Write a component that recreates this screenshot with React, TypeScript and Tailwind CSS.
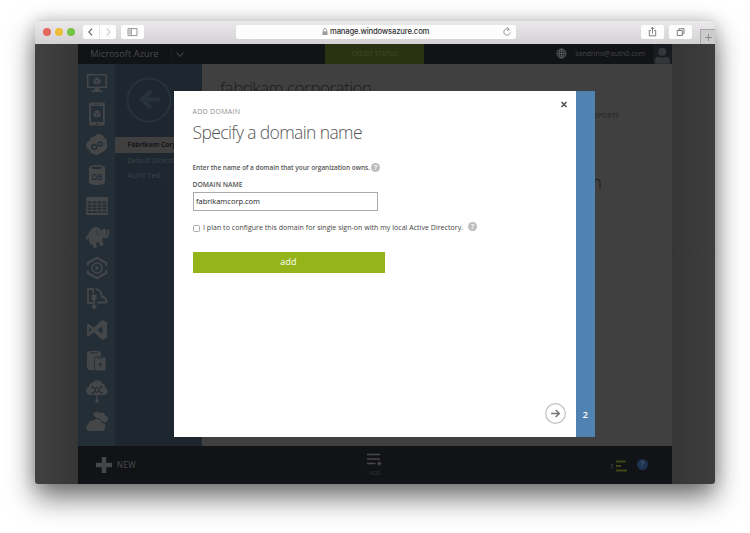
import React from "react";

const ink = "#454648";
const bg = "#232e37";

function Cube({ x, y }: { x: number; y: number }) {
  return (
    <g transform={`translate(${x} ${y})`}>
      <path d="M0-4 3.5-2v4L0 4-3.5 2v-4z" fill={ink} />
      <path d="M-3.4-1.9 0 0l3.4-1.9M0 0v3.8" stroke={bg} strokeWidth=".7" fill="none" />
    </g>
  );
}

const sideIcons: React.ReactNode[] = [
  <>
    <path d="M2.7 3.7h18.6v12.6H2.7z" fill="none" stroke={ink} strokeWidth="1.6" />
    <path d="M9.5 17h5v2.5h3V21h-11v-1.5h3z" />
    <Cube x={12} y={10} />
  </>,
  <>
    <path fillRule="evenodd" d="M5 .6h14a.8.8 0 0 1 .8.8v21.2a.8.8 0 0 1-.8.8H5a.8.8 0 0 1-.8-.8V1.400A.8.8 0 0 1 5 .6zM6 4v16h12V4zM9 1.800v.8h6v-.8zM11 21v1.200h2V21z" />
    <Cube x={12} y={12} />
  </>,
  <>
    <path d="M4 17a4.600 4.600 0 0 1-.6-9 5 5 0 0 1 5-4.500 5.500 5.500 0 0 1 10 1.500 3.500 3.500 0 0 1 2 5.500 4 4 0 0 1-1.500 6.500 4 4 0 0 1-4 2.500 4.600 4.600 0 0 1-7 1.500A4 4 0 0 1 4 17z" transform="translate(1 0)" />
    <circle cx="9.300" cy="14" r="2.300" fill="none" stroke={bg} strokeWidth="1.400" />
    <circle cx="15.200" cy="11" r="2" fill="none" stroke={bg} strokeWidth="1.300" />
    <path d="M9.300 10.500v7M5.800 14h7M6.800 11.500l5 5M11.800 11.500l-5 5" stroke={bg} strokeWidth=".8" strokeDasharray="1 5.200" />
  </>,
  <>
    <path d="M4 5v14c0 2 3 3 8 3s8-1 8-3V5c0-2-3-3-8-3s-8 1-8 3z" />
    <ellipse cx="12" cy="4.800" rx="5.800" ry="1.200" fill={bg} />
    <text x="12" y="17" textAnchor="middle" fontSize="8" fontWeight="600" fill={bg} className="font-['Open_Sans',sans-serif]">DB</text>
  </>,
  <>
    <path d="M1.200 3h21.600v18H1.200z" />
    <path d="M2.700 8.600h18.600M2.700 11.700h18.600M2.700 14.800h18.600M2.700 17.900h18.600" stroke={bg} strokeWidth="2" strokeDasharray="3.900 1" />
  </>,
  <>
    <path d="M5.500 5.500C8 1.500 12 1 14 3.500c1.500.3 2 1.500 2.500 2.500 1.300-3 4-3.500 4.700-1 .6 2 .3 4-.5 5.200 1.200.4 1.800-1 1.600-6l1.700-.2c.8 6-.7 9.500-3.800 9.200l-1.700-1.200-1.300 2.800 1.500 5.500-3.200 1-2.300-4.600-2 1.100.8 4.500-3.200 1-1-4-2.200.7-1.100-2.500c-1-2-.8-3.400-.3-4.700L2 15 .5 13.500c1.500-2 2.500-5 5-8z" />
    <path d="M11.500 4.500c-1 3 .4 6 3 6M16 6.900h1M5 20.500l-2-2" stroke={bg} strokeWidth=".8" fill="none" />
  </>,
  <>
    <path d="M2.800 9.800V7L12 1.900 21.200 7v2.800M2.800 14.200V17l9.200 5.100 9.200-5.100v-2.800" fill="none" stroke={ink} strokeWidth="2.200" />
    <circle cx="12" cy="12" r="5" fill="none" stroke={ink} strokeWidth="1.600" />
    <path d="M10.500 9.200v5.600l4-2.800z" />
  </>,
  <>
    <path d="M8 16H3V2h5v4M10.500 2c4 .3 6 3.500 6.500 8 3 0 4.500 1.500 4.500 5.500H12" fill="none" stroke={ink} strokeWidth="1.900" />
    <path d="M6.500 7.500h5v5.500h-5zM8.200 13h1.800v5.500h2.500L9.100 23l-3.400-4.500h2.500z" />
  </>,
  <path fillRule="evenodd" d="M17.200 2 22 4.200v15.600L17.200 22 9 14.300l-5.300 4L2 17.300V6.700l1.700-1 5.300 4zM17.300 8.200 12 12l5.300 3.800zM4 9.200v5.600L6.700 12z" />,
  <>
    <path d="M2 4v14.500C2 20.500 5 21.500 9 21.500V8h7V4c0-3-14-3-14 0z" />
    <path d="M5 3.900h8" stroke={bg} strokeWidth="1" />
    <path d="M9.500 9v11.500c0 2 11.500 2 11.500 0V9c0-2.300-11.500-2.300-11.500 0z" stroke={bg} strokeWidth=".7" />
    <path d="M12.500 8.900h6" stroke={bg} strokeWidth="1" />
    <path d="m16.500 12-3.300 4h2l-1.200 3.300 3.500-4.500h-2z" fill={bg} />
  </>,
  <>
    <path d="M4.500 16a4.500 4.500 0 0 1-.5-8.500 4.300 4.300 0 0 1 4-4 5.500 5.500 0 0 1 9.500 1 3.500 3.500 0 0 1 2.500 4A3.900 3.900 0 0 1 19.500 16z" />
    <path d="M12 14v8" stroke={ink} strokeWidth="1.300" />
    <circle cx="12" cy="22" r="1.800" />
    <circle cx="12" cy="11" r="2.200" fill="none" stroke={bg} strokeWidth="1.100" />
    <path d="m7.500 8 2.600 1.800M16.500 8l-2.600 1.800M7.500 14l2.600-1.800m6.400 1.800-2.600-1.800" stroke={bg} strokeWidth=".9" />
    <g fill={bg}><circle cx="7.500" cy="8" r="1.100" /><circle cx="16.500" cy="8" r="1.100" /><circle cx="7.500" cy="14" r="1.100" /><circle cx="16.500" cy="14" r="1.100" /></g>
  </>,
  <>
    <path d="M8 4.500c1-3 5-3.500 6.500-1.500C17 1.500 20 3 20 5.500c3 0 4.500 4.500 1.500 6.500-3 2-12-5-13.500-7.500z" />
    <path d="M3.500 21.500a4 4 0 0 1-.5-7.500C3 11 6 9.500 8 10.500c2-3.500 8.500-2.500 9 2 4 .5 4.500 3 3.500 5.500-.8 2.500-2 3.500-4 3.500z" stroke={bg} strokeWidth="1" />
  </>,
];

function Help() {
  return (
    <span className="flex size-[9px] shrink-0 items-center justify-center rounded-full bg-[#bdbdbd] text-[7px] leading-none font-semibold text-white">?</span>
  );
}

function TitleBar() {
  return (
    <header className="relative flex h-[24px] shrink-0 items-center rounded-t-[4px] border-t border-[#d6d6d6] bg-linear-to-b from-[#ebe9eb] to-[#d3d1d3] pl-[7.500px]">
      <div className="flex w-[40.500px] gap-[4.400px]">
        <i className="size-[8px] rounded-full bg-[#e2695c]" />
        <i className="size-[8px] rounded-full bg-[#ecbd37]" />
        <i className="size-[8px] rounded-full bg-[#76c443]" />
      </div>
      <div className="flex h-[14px] w-[33px] divide-x divide-[#e4e4e4] rounded-[2px] bg-[#fdfdfd]">
        <svg viewBox="0 0 16 14" className="w-[16.500px]" fill="none" stroke="#555" strokeWidth="1.100"><path d="M9.300 3.500 6 7l3.300 3.500" /></svg>
        <svg viewBox="0 0 16 14" className="w-[16.500px]" fill="none" stroke="#d0d0d0" strokeWidth="1.100"><path d="M6.500 3.500 9.800 7l-3.300 3.500" /></svg>
      </div>
      <div className="ml-[5px] h-[14px] w-[23px] rounded-[2px] bg-[#fdfdfd]">
        <svg viewBox="0 0 23 14" fill="none" stroke="#7a7a7a" strokeWidth=".8"><path d="M7 3.600h9v7H7zM10.300 3.600v7M8 5.500h1.500M8 7h1.500M8 8.500h1.500" /></svg>
      </div>
      <div className="ml-[91.500px] flex h-[13.500px] w-[280px] items-center rounded-[2px] bg-[#fdfdfd] pl-[86px]">
        <svg width="6" height="8" viewBox="0 0 6 8"><path d="M.5 3.300h5V7h-5z" fill="#9a9a9a" /><path d="M1.400 3.500V2.200a1.600 1.600 0 0 1 3.200 0v1.300" fill="none" stroke="#9a9a9a" strokeWidth=".9" /></svg>
        <span className="ml-[2.500px] w-[103px] font-['Inter',sans-serif] text-[7.700px] leading-none font-medium tracking-[-0.180px] text-[#333]">manage.windowsazure.com</span>
        <svg width="10" height="10" viewBox="0 0 10 10" className="ml-[69px]" fill="none" stroke="#8a8a8a" strokeWidth=".9"><path d="M7.700 3.200A3.200 3.200 0 1 0 8.200 5.500M5 .5l2 1.700-2 1.600" /></svg>
      </div>
      <div className="ml-[125.500px] flex gap-[5px]">
        <svg viewBox="0 0 23 14" className="h-[14px] w-[23px] rounded-[2px] bg-[#fdfdfd]" fill="none" stroke="#707070" strokeWidth=".9"><path d="M10 5.500H8.300v5.300h6.400V5.500H13M11.500 8.500V2.200M9.800 4l1.700-1.800L13.200 4" /></svg>
        <svg viewBox="0 0 23 14" className="h-[14px] w-[23px] rounded-[2px] bg-[#fdfdfd]" fill="none" stroke="#707070" strokeWidth=".9"><path d="M8.300 5.500h5v5h-5zM10 5.300V3.700h5v5h-1.500" /></svg>
      </div>
      <div className="absolute right-0 bottom-0 size-[15px] border-t border-l border-[#a9a9a9] bg-[#cdcccd]">
        <svg viewBox="0 0 14 14" stroke="#888" strokeWidth=".9"><path d="M7.500 4v7M4 7.500h7" /></svg>
      </div>
    </header>
  );
}

function Dialog() {
  return (
    <div className="absolute top-[91px] left-[174px] z-10 flex h-[346px] w-[420.500px] bg-white text-[#444]">
      <div className="flex grow flex-col items-start pt-[16px] pl-[18.500px]">
        <div className="h-[12px] text-[7px] leading-[10px] tracking-[0.300px] text-[#8f8f8f]">ADD DOMAIN</div>
        <h1 className="mt-[1px] h-[24px] text-[17.500px] leading-[24px] font-light tracking-[-0.620px] whitespace-nowrap text-[#555]">Specify a domain name</h1>
        <div className="mt-[18px] flex h-[11px] items-center gap-[2.500px] text-[6.500px] font-semibold tracking-[-0.040px] whitespace-nowrap text-[#555]">
          <span className="w-[176px]">Enter the name of a domain that your organization owns.</span>
          <Help />
        </div>
        <label className="mt-[7px] h-[10px] text-[6.800px] leading-[10px] font-semibold text-[#555]">DOMAIN NAME</label>
        <div className="mt-[2px] flex h-[18.500px] w-[185.500px] items-center border border-[#aaa] pl-[2.500px] text-[7.500px] text-[#222]">fabrikamcorp.com</div>
        <div className="mt-[10.500px] flex h-[14px] items-center text-[7px] tracking-[0.040px] whitespace-nowrap">
          <i className="mt-[1px] size-[7px] rounded-[1.500px] border border-[#aaa]" />
          <span className="ml-[3.500px] w-[265px]">I plan to configure this domain for single sign-on with my local Active Directory.</span>
          <span className="-mt-[4px]"><Help /></span>
        </div>
        <button className="mt-[17px] h-[20.500px] w-[192px] bg-[#95b41a] pb-[2px] text-[9px] leading-none tracking-[0.200px] text-white">add</button>
      </div>
      <div className="flex w-[27px] shrink-0 flex-col items-end justify-between pt-[8.500px] pr-[8px] pb-[12.500px]">
        <svg width="8" height="8" viewBox="0 0 8 8" stroke="#555" strokeWidth="1.600"><path d="m1.500 2 5 5m0-5-5 5" /></svg>
        <svg width="23" height="23" viewBox="0 0 23 23" className="mr-[1.500px] shrink-0" fill="none"><circle cx="11.500" cy="11.500" r="9.800" stroke="#c4c4c4" strokeWidth="1.300" /><path d="M7 11.500h8M11.700 8l3.500 3.500-3.500 3.500" stroke="#777" strokeWidth="1.600" /></svg>
      </div>
      <div className="flex w-[18.500px] shrink-0 items-end justify-center bg-[#5083b2] pb-[15px] text-[9.500px] font-semibold text-white">2</div>
    </div>
  );
}

export default function App() {
  return (
    <div className="relative h-[533px] w-[750px] overflow-hidden bg-white pt-[19.500px] pl-[35px] font-['Open_Sans',sans-serif]">
      <div className="flex h-[464px] w-[680px] flex-col rounded-[4px] shadow-[0_14px_28px_rgba(0,0,0,0.55),0_0_16px_rgba(0,0,0,0.16)]">
        <TitleBar />
        <div className="flex min-h-0 grow overflow-hidden rounded-b-[3px]">
          <div className="w-[43.300px] bg-linear-to-r from-[#414141] to-[#363636]" />
          <div className="flex w-[593.700px] flex-col">
            <div className="flex h-[20.500px] shrink-0 items-center bg-[#111317] text-[#4b4c4e]">
              <span className="w-[81px] pl-[12px] text-[9px] tracking-[0.150px] whitespace-nowrap">Microsoft Azure</span>
              <svg width="20" height="14" viewBox="0 0 20 14" className="ml-[12px]" fill="none" stroke="#505153"><path d="M.5 1v12" stroke="#1a1c20" /><path d="m5.500 5.500 3.500 4 3.500-4" /></svg>
              <div className="ml-[134.300px] flex h-full w-[99px] items-center justify-center bg-[#2a3311] text-[6.200px] tracking-[0.100px] text-[#43492f]">CREDIT STATUS</div>
              <svg width="11" height="11" viewBox="0 0 11 11" className="ml-[132px]" fill="none" stroke="#58595b" strokeWidth=".9"><circle cx="5.500" cy="5.500" r="4.600" /><ellipse cx="5.500" cy="5.500" rx="2.200" ry="4.600" /><path d="M5.500 1v9M1 5.500h9M1.700 3.200h7.600M1.700 7.800h7.600" /></svg>
              <span className="ml-[8px] w-[78px] text-[7px] whitespace-nowrap text-[#454648]">sandrino@auth0.com</span>
              <svg viewBox="0 0 19 20" className="ml-auto h-full w-[19px] bg-[#191b20]" fill="#34363a"><circle cx="9.300" cy="7.500" r="4" /><path d="M2 19.500v-3c0-3 2-4 4-4 2 1.500 5 1.500 7 0 2 0 4 1 4 4v3z" /></svg>
            </div>
            <div className="flex min-h-0 grow bg-[#404040]">
              <nav className="flex w-[36.700px] shrink-0 flex-col items-center bg-[#232e37] pt-[3.500px]">
                {sideIcons.map((icon, i) => (
                  <div key={i} className="flex h-[30.850px] shrink-0 items-center">
                    <svg width="24" height="24" viewBox="0 0 24 24" fill={ink} className="overflow-visible">{icon}</svg>
                  </div>
                ))}
              </nav>
              <div className="w-[87px] shrink-0 overflow-hidden bg-[#1e272f] text-[6.700px] whitespace-nowrap text-[#3c434a]">
                <svg width="46" height="46" viewBox="0 0 46 46" className="mt-[13px] ml-[11.500px]" fill="none" stroke="#27323b"><circle cx="23" cy="23" r="21.500" strokeWidth="2" /><path d="M14 22.500h20" strokeWidth="4" /><path d="m25 14-9 8.500 9 8.500" strokeWidth="4" /></svg>
                <div className="mt-[14px] h-[15.500px] bg-[#404040] pl-[12.500px] leading-[16px] font-bold text-[#15171a]">Fabrikam Corporation</div>
                <div className="h-[15.500px] pl-[12.500px] leading-[16px]">Default Directory</div>
                <div className="h-[15.500px] pl-[12.500px] leading-[16px]">Auth0 Test</div>
              </div>
              <main className="flex grow flex-col text-[#1a1a1a]">
                <div className="mt-[12px] pl-[18px] text-[17px] leading-[24px] font-light tracking-[-0.480px]">fabrikam corporation</div>
                <div className="mt-[10px] pr-[53px] text-right text-[6.700px] leading-[12px] text-[#222]">REPORTS</div>
                <div className="mt-[48px] pr-[70px] text-right text-[18px] leading-[24px] font-light">domain</div>
              </main>
            </div>
            <footer className="flex h-[37.500px] shrink-0 items-center bg-[#111317] text-[#4b4c4e]">
              <svg width="16" height="16" viewBox="0 0 16 16" className="ml-[17.500px]" stroke={ink} strokeWidth="4.500"><path d="M8 0v16M0 8h16" /></svg>
              <span className="ml-[5px] w-[249px] text-[8.300px] tracking-[0.200px]">NEW</span>
              <div className="mt-[1px] flex w-[16px] flex-col items-center">
                <svg width="16" height="13" viewBox="0 0 16 13" stroke="#484848" strokeWidth="1.600"><path d="M1 1.500h13M1 6h13M1 10.500h8.500M11.300 10.500h4M13.300 8.500v4" /></svg>
                <span className="mt-[3px] ml-[3px] text-[5.800px] leading-[8px] text-[#333538]">ADD</span>
              </div>
              <span className="mt-[3px] ml-[228px] text-[7.500px]">1</span>
              <svg width="12" height="12" viewBox="0 0 12 12" className="ml-[1.500px] mt-[2px]" stroke="#3f4715" strokeWidth="2"><path d="M0 1.500h9.500M0 6h5M0 10.500h11" /></svg>
              <span className="ml-[9px] flex size-[11px] items-center justify-center rounded-full bg-[#1c3250] text-[8.500px] font-semibold text-[#52616f]">?</span>
            </footer>
          </div>
          <div className="grow bg-linear-to-r from-[#353535] to-[#3e3e3e]" />
        </div>
      </div>
      <Dialog />
    </div>
  );
}
